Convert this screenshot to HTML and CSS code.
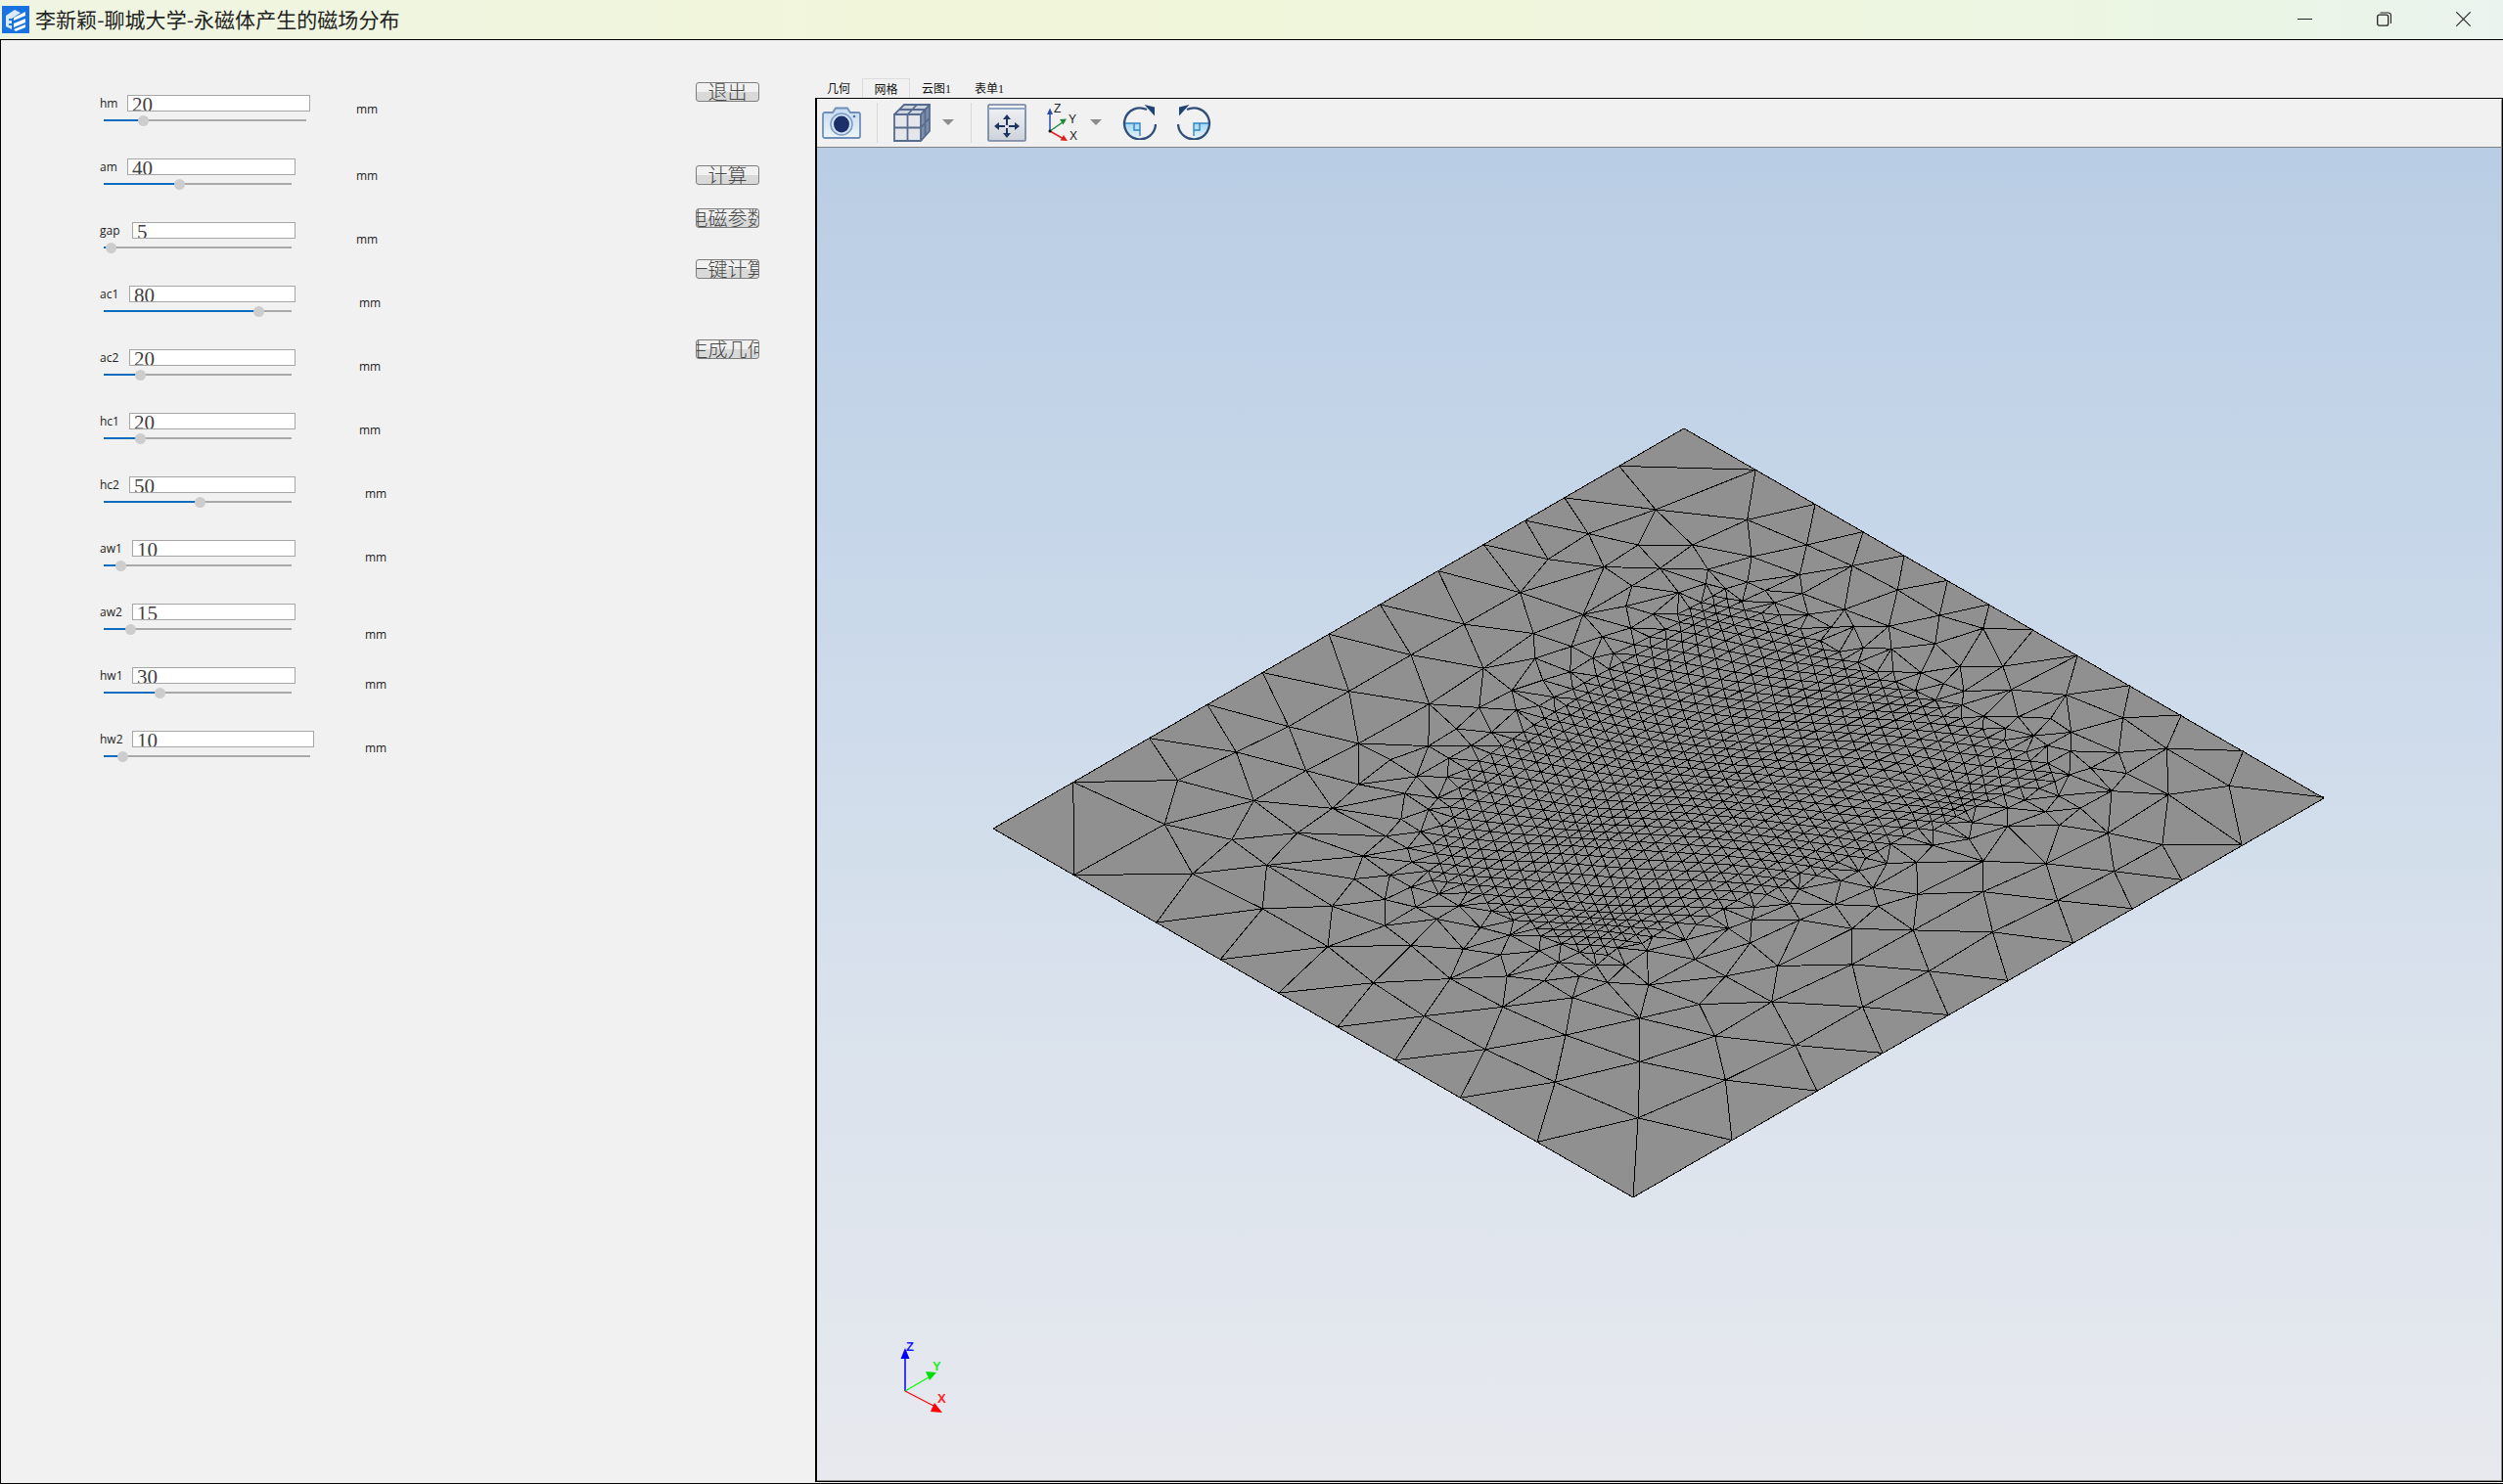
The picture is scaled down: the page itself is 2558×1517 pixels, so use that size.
FILE: index.html
```html
<!DOCTYPE html>
<html lang="zh">
<head>
<meta charset="utf-8">
<title>李新颖-聊城大学-永磁体产生的磁场分布</title>
<link rel="stylesheet" href="styles.css">
</head>
<body>
<div class="window">
  <header class="titlebar">
    <svg class="appicon" viewBox="0 0 28 28">
      <rect width="28" height="28" fill="#1c78e6"/>
      <path d="M0 0h28v28H0z" fill="#1566d2" opacity=".35"/>
      <path d="M4 10 13 4l6 3-9 6v11l-6-3z" fill="#dcebfb"/>
      <path d="M7 13h3v2H7zM7 18h3v2H7z" fill="#1c78e6"/>
      <path d="M12 12l12-6v4l-12 5zM12 18l12-5v4l-12 5zM12 24l12-5v3l-10 4z" fill="#fff"/>
    </svg>
    <div class="apptitle">李新颖-聊城大学-永磁体产生的磁场分布</div>
    <div class="winctl">
      <svg class="winbtn" viewBox="0 0 15 15"><path d="M0 7.500h15" stroke="#222" fill="none"/></svg>
      <svg class="winbtn" viewBox="0 0 15 15"><rect x=".7" y="3.200" width="11" height="11" rx="2" fill="none" stroke="#222" stroke-width="1.300"/><path d="M3.500 1h8a3 3 0 0 1 3 3v8" fill="none" stroke="#222" stroke-width="1.100"/></svg>
      <svg class="winbtn" viewBox="0 0 15 15"><path d="M.3.3l14.400 14.400M14.700.3.3 14.700" stroke="#222" stroke-width="1.100" fill="none"/></svg>
    </div>
  </header>

  <main class="main">
    <section class="params">
      <div class="row"><div class="field"><div class="line"><span class="lab lab-a">hm</span><div class="val w-187">20</div></div><div class="track w-207"><div class="fill" style="width:40px"><i class="thumb"></i></div></div></div><span class="mm mm-a mt-6">mm</span></div>
      <div class="row"><div class="field"><div class="line"><span class="lab lab-a">am</span><div class="val w-172">40</div></div><div class="track w-192"><div class="fill" style="width:77px"><i class="thumb"></i></div></div></div><span class="mm mm-a">mm</span></div>
      <div class="row"><div class="field"><div class="line"><span class="lab lab-c">gap</span><div class="val w-167">5</div></div><div class="track w-192"><div class="fill" style="width:7px"><i class="thumb"></i></div></div></div><span class="mm mm-a">mm</span></div>
      <div class="row"><div class="field"><div class="line"><span class="lab lab-b">ac1</span><div class="val w-170">80</div></div><div class="track w-192"><div class="fill" style="width:158px"><i class="thumb"></i></div></div></div><span class="mm mm-b">mm</span></div>
      <div class="row"><div class="field"><div class="line"><span class="lab lab-b">ac2</span><div class="val w-170">20</div></div><div class="track w-192"><div class="fill" style="width:37px"><i class="thumb"></i></div></div></div><span class="mm mm-b">mm</span></div>
      <div class="row"><div class="field"><div class="line"><span class="lab lab-b">hc1</span><div class="val w-170">20</div></div><div class="track w-192"><div class="fill" style="width:37px"><i class="thumb"></i></div></div></div><span class="mm mm-b">mm</span></div>
      <div class="row"><div class="field"><div class="line"><span class="lab lab-b">hc2</span><div class="val w-170">50</div></div><div class="track w-192"><div class="fill" style="width:98px"><i class="thumb"></i></div></div></div><span class="mm mm-c">mm</span></div>
      <div class="row"><div class="field"><div class="line"><span class="lab lab-c">aw1</span><div class="val w-167">10</div></div><div class="track w-192"><div class="fill" style="width:17px"><i class="thumb"></i></div></div></div><span class="mm mm-c">mm</span></div>
      <div class="row"><div class="field"><div class="line"><span class="lab lab-c">aw2</span><div class="val w-167">15</div></div><div class="track w-192"><div class="fill" style="width:27px"><i class="thumb"></i></div></div></div><span class="mm mm-c mt-23">mm</span></div>
      <div class="row"><div class="field"><div class="line"><span class="lab lab-c">hw1</span><div class="val w-167">30</div></div><div class="track w-192"><div class="fill" style="width:57px"><i class="thumb"></i></div></div></div><span class="mm mm-c">mm</span></div>
      <div class="row"><div class="field"><div class="line"><span class="lab lab-c">hw2</span><div class="val w-186">10</div></div><div class="track w-211"><div class="fill" style="width:19px"><i class="thumb"></i></div></div></div><span class="mm mm-c">mm</span></div>
    </section>

    <section class="actions">
      <button class="btn"><span>退出</span></button>
      <button class="btn"><span>计算</span></button>
      <button class="btn"><span>电磁参数</span></button>
      <button class="btn"><span>一键计算</span></button>
      <button class="btn"><span>生成几何</span></button>
    </section>

    <section class="workspace">
      <nav class="tabs">
        <span class="tab">几何</span>
        <span class="tab tab-on">网格</span>
        <span class="tab">云图1</span>
        <span class="tab">表单1</span>
      </nav>
      <div class="frame">
        <div class="toolbar">
          <svg class="ic-camera" viewBox="0 0 40 33">
            <defs>
              <linearGradient id="camg" x1="0" y1="0" x2="0" y2="1"><stop offset="0" stop-color="#c6daf0"/><stop offset="1" stop-color="#eef4fa"/></linearGradient>
              <linearGradient id="fitg" x1="0" y1="0" x2="0" y2="1"><stop offset="0" stop-color="#f2f3f5"/><stop offset="1" stop-color="#cdd2db"/></linearGradient>
              <linearGradient id="rotg" x1="0" y1="0" x2="0" y2="1"><stop offset="0" stop-color="#a4d6f3"/><stop offset="1" stop-color="#e4f4fc"/></linearGradient>
            </defs>
            <path d="M3 6h8l3-4.500h12l3 4.500h8a2 2 0 0 1 2 2v22a2 2 0 0 1-2 2H3a2 2 0 0 1-2-2V8a2 2 0 0 1 2-2z" fill="url(#camg)" stroke="#6e90b8" stroke-width="1.800"/>
            <circle cx="20" cy="18" r="11" fill="#d4e4f4" stroke="#7b9cc2" stroke-width="1.500"/>
            <ellipse cx="20" cy="18" rx="8" ry="8.500" fill="#1b2f68"/>
            <circle cx="33" cy="10" r="1.300" fill="#4d6f9f"/>
          </svg>
          <i class="sep ml-16"></i>
          <svg class="ic-cube ml-16" viewBox="0 0 38 39">
            <path d="M11 1h26L28 11H1z" fill="#ced5df"/>
            <path d="M1 11h27v27H1z" fill="#e4e6ea"/>
            <path d="M28 11l9-10v27l-9 10z" fill="#7f8fa9"/>
            <path d="M11 1h26L28 11H1zM1 11h27v27H1zM28 11l9-10v27l-9 10zM14.500 11v27M1 24.500h27M24 1 14.500 11M6 6h26M32.500 6v27M28 24.500l9-10" fill="none" stroke="#566b8e" stroke-width="1.800"/>
          </svg>
          <i class="caret ml-12"></i>
          <i class="sep ml-17"></i>
          <svg class="ic-fit ml-16" viewBox="0 0 40 39">
            <rect x="1" y="1" width="38" height="37" rx="1" fill="url(#fitg)" stroke="#6e7f9d" stroke-width="1.600"/>
            <path d="M1 4h38v2H1z" fill="#8fa6c6"/>
            <path d="M20 11l-4 5h3v6h2v-6h3zM20 35l-4-5h3v-5h2v5h3zM7 23l5-4v3h6v2h-6v3zM33 23l-5-4v3h-6v2h6v3z" fill="#1f3560"/>
          </svg>
          <svg class="ic-axes ml-21" viewBox="0 0 32 38">
            <path d="M3 28V9" stroke="#2a4ea8" stroke-width="1.500" fill="none"/>
            <path d="M3 4.500 0 11h6z" fill="#2a4ea8"/>
            <path d="M3 28l13-9" stroke="#1a8a3a" stroke-width="1.500" fill="none"/>
            <path d="M20 15.500l-7 .5 3.500 5.500z" fill="#1a8a3a"/>
            <path d="M3 28l14 8" stroke="#e02020" stroke-width="1.500" fill="none"/>
            <path d="M21 38l-7.500-.5 3.500-5.500z" fill="#e02020"/>
            <circle cx="3" cy="28" r="1.500" fill="#111"/>
            <text class="ax" x="7" y="9">Z</text>
            <text class="ax" x="22" y="20">Y</text>
            <text class="ax" x="23" y="37">X</text>
          </svg>
          <i class="caret ml-12"></i>
          <svg class="ic-rot ml-21" viewBox="0 0 35 36">
            <path d="M1.500 19H18V34.500A16.500 16.500 0 0 1 1.500 19z" fill="url(#rotg)"/>
            <path d="M1.500 19H18V32M12 19v7h6" fill="none" stroke="#2f86c4" stroke-width="1.400"/>
            <path d="M34 20A16 16 0 1 1 25 5" fill="none" stroke="#2f4f7a" stroke-width="2.300"/>
            <path d="M22.500 0 33 2.500v9z" fill="#1f4374"/>
          </svg>
          <svg class="ic-rot ic-flip ml-21" viewBox="0 0 35 36">
            <path d="M1.500 19H18V34.500A16.500 16.500 0 0 1 1.500 19z" fill="url(#rotg)"/>
            <path d="M1.500 19H18V32M12 19v7h6" fill="none" stroke="#2f86c4" stroke-width="1.400"/>
            <path d="M34 20A16 16 0 1 1 25 5" fill="none" stroke="#2f4f7a" stroke-width="2.300"/>
            <path d="M22.500 0 33 2.500v9z" fill="#1f4374"/>
          </svg>
        </div>
        <div class="viewport">
          <svg id="mesh" class="scene" viewBox="835 151 1720 1361">
            <polygon class="plate" points="1721,438 2375,816 1669,1224 1015,847"/>
            <path id="edges" class="edges" d=""/>
            <polygon class="plate-edge" points="1721,438 2375,816 1669,1224 1015,847"/>
            <path d="M925 1422V1385" class="tz"/><path d="M925 1378l-4.500 11h9z" class="hz"/>
            <path d="M925 1422l24-14" class="ty"/><path d="M957 1403l-11-1 4 9z" class="hy"/>
            <path d="M925 1422l29 15" class="tx"/><path d="M963 1444l-12-1 4-9z" class="hx"/>
            <text class="lz" x="926" y="1381">Z</text>
            <text class="ly" x="953" y="1401">Y</text>
            <text class="lx" x="958" y="1434">X</text>
          </svg>
        </div>
      </div>
    </section>
  </main>
</div>
<script src="script.js"></script>
</body>
</html>
```
FILE: styles.css
```css
* { box-sizing: border-box; }
html, body { margin: 0; padding: 0; background: #f1f1f1; }
.window { width: 2558px; height: 1517px; display: flex; flex-direction: column; overflow: hidden; }

.titlebar { height: 41px; flex: none; display: flex; align-items: center; padding-left: 2px; padding-bottom: 1px; border-bottom: 1px solid #000;
  background: linear-gradient(90deg, #eff5e2 0, #f1f6da 40%, #f0f6dc 60%, #eaf5e3 88%, #ebf3ee 100%); }
.appicon { width: 28px; height: 28px; flex: none; }
.apptitle { margin-left: 6px; font: 21px/26px "Noto Sans CJK SC", sans-serif; color: #222; white-space: nowrap; padding-bottom: 2px; letter-spacing: .05px; }
.winctl { margin-left: auto; display: flex; gap: 66px; padding-right: 33px; }
.winbtn { width: 15px; height: 15px; display: block; }

.main { flex: 1; display: flex; background: #f1f1f1; border-left: 1px solid #000; border-bottom: 1px solid #000; min-height: 0; }

.params { width: 710px; flex: none; padding: 56px 0 0 101px; }
.row { height: 65px; display: flex; align-items: flex-start; }
.field { width: 240px; flex: none; }
.line { display: flex; height: 17px; }
.lab { font: 12px/17px "Open Sans", sans-serif; color: #222; flex: none; }
.lab-a { width: 28px; }
.lab-b { width: 30px; }
.lab-c { width: 33px; }
.val { height: 17px; border: 1px solid #a6a6a6; background: #fff; overflow: hidden; padding-left: 4px;
  font: 21px/19px "Liberation Serif", serif; color: #3f3f3f; flex: none; }
.w-187 { width: 187px; }
.w-186 { width: 186px; }
.w-172 { width: 172px; }
.w-170 { width: 170px; }
.w-167 { width: 167px; }
.track { height: 2px; margin: 8px 0 0 4px; background: #a9a9a9; position: relative; }
.w-207 { width: 207px; }
.w-192 { width: 192px; }
.w-211 { width: 211px; }
.fill { height: 2px; background: #0b6cbf; position: relative; }
.thumb { position: absolute; right: -5.500px; top: -4.500px; width: 11px; height: 11px; border-radius: 50%; background: #cdcdcd; }
.mm { font: 12px/15px "Open Sans", sans-serif; color: #222; margin-top: 10px; }
.mm-a { margin-left: 22px; }
.mm-b { margin-left: 25px; }
.mm-c { margin-left: 31px; }
.mt-6 { margin-top: 7px; }
.mt-23 { margin-top: 24px; }

.actions { width: 122px; flex: none; display: grid; grid-template-rows: 85px 44px 52px 82px 20px; align-content: start; padding-top: 43px; }
.btn { width: 65px; height: 20px; padding: 0; display: flex; justify-content: center; overflow: hidden; border: 1px solid #7d7d7d; border-radius: 3px;
  background: linear-gradient(#f1f1f1 50%, #d9d9d9 50%); font: 300 20px/18px "Noto Sans CJK SC", serif; color: #484848; white-space: nowrap; }
.btn span { flex: none; }

.workspace { flex: 1; min-width: 0; display: flex; flex-direction: column; padding-bottom: 1px; }
.tabs { height: 59px; flex: none; display: flex; align-items: flex-end; }
.tab { height: 20px; padding: 0 12px; font: 12px/23px "Liberation Serif", "Noto Sans CJK SC", serif; color: #111; white-space: nowrap; }
.tab-on { padding: 0 11.500px; border: 1px solid #dcdcdc; border-bottom: 0; line-height: 22px; }
.frame { flex: 1; min-height: 0; display: flex; flex-direction: column; border: 1px solid #000; border-left-width: 2px; }
.toolbar { height: 50px; flex: none; display: flex; align-items: center; padding: 0 0 2px 5px; background: #f1f1f1; border-top: 1px solid #fff; border-right: 1px solid #8a8a8a; border-bottom: 1px solid #808080; }
.ml-12 { margin-left: 12px; }
.ml-16 { margin-left: 16px; }
.ml-17 { margin-left: 17px; }
.ml-21 { margin-left: 21px; }
.sep { width: 1px; height: 41px; background: #d8d8d8; flex: none; }
.caret { width: 0; height: 0; border-left: 6px solid transparent; border-right: 6px solid transparent; border-top: 6px solid #8b8b8b; flex: none; }
.ic-camera { width: 40px; height: 33px; flex: none; }
.ic-cube { width: 38px; height: 39px; flex: none; }
.ic-fit { width: 40px; height: 39px; flex: none; }
.ic-axes { width: 32px; height: 38px; flex: none; }
.ic-rot { width: 35px; height: 36px; flex: none; }
.ic-flip { transform: scaleX(-1); }
.ax { font: 12px "Liberation Sans", sans-serif; fill: #222; }

.viewport { flex: 1; min-height: 0; position: relative; overflow: hidden; background: linear-gradient(#b9cde4 0, #c7d7e9 30%, #d8e1ec 62%, #e7e9ee 100%); border-right: 1px solid #8a8a8a; border-bottom: 1px solid #8a8a8a; }
.scene { position: absolute; left: 0; top: 0; width: 1720px; height: 1361px; display: block; }
.plate { fill: #909090; }
.plate-edge { fill: none; stroke: #000; stroke-width: 1; shape-rendering: crispEdges; }
.edges { fill: none; stroke: #000; stroke-width: 1; shape-rendering: crispEdges; }
.tz { stroke: #0000ff; stroke-width: 1.500; fill: none; }
.ty { stroke: #00ff00; stroke-width: 1.200; fill: none; }
.tx { stroke: #ff0000; stroke-width: 1.200; fill: none; }
.hz { fill: #0000ff; }
.hy { fill: #00e000; }
.hx { fill: #ff0000; }
.lz, .ly, .lx { font: bold 13px "Liberation Sans", sans-serif; }
.lz { fill: #1a1aff; }
.ly { fill: #22ee22; }
.lx { fill: #ff2222; }
```
FILE: script.js
```js
// Builds the triangular surface mesh of the plate: a graded point set, Delaunay-triangulated.
(function () {
  var L = [1015, 847], T = [1721, 438], B = [1669, 1224];
  var e1 = [T[0] - L[0], T[1] - L[1]], e2 = [B[0] - L[0], B[1] - L[1]];
  var det = e1[0] * e2[1] - e2[0] * e1[1];
  function toUV(x, y) {
    var dx = x - L[0], dy = y - L[1];
    return [(dx * e2[1] - e2[0] * dy) / det, (e1[0] * dy - dx * e1[1]) / det];
  }
  function toXY(p) {
    return [L[0] + p[0] * e1[0] + p[1] * e2[0], L[1] + p[0] * e1[1] + p[1] * e2[1]];
  }
  var seed = 12345;
  function rnd() { seed = (seed * 16807) % 2147483647; return seed / 2147483647; }

  var pts = [];
  function add(u, v) { pts.push([u + (rnd() - 0.5) * 2e-6, v + (rnd() - 0.5) * 2e-6]); }

  // boundary nodes
  var onLT = [.116,.226,.31,.39,.486,.56,.644,.71,.77,.827,.906];
  var onLB = [.126,.255,.355,.446,.538,.628,.73,.85];
  var onTR = [.112,.205,.28,.344,.412,.477,.546,.615,.697,.777,.874];
  var onBR = [.143,.266,.361,.456,.542,.637,.722,.794,.881];
  add(0, 0); add(1, 0); add(0, 1); add(1, 1);
  onLT.forEach(function (f) { add(f, 0); });
  onLB.forEach(function (f) { add(0, f); });
  onTR.forEach(function (f) { add(1, f); });
  onBR.forEach(function (f) { add(f, 1); });

  // coarse interior nodes, read from the picture
  var coarse = [775,193,880,213,698,240,817,262,755,262,652,290,716,305,780,308,885,285,948,262,1000,303,620,355,692,398,748,342,835,310,880,335,940,320,1052,350,1100,400,556,417,635,435,1002,422,1095,455,1150,425,1045,465,495,477,578,503,1047,510,1128,548,1182,545,1245,555,1190,598,424,548,516,573,355,617,435,650,515,655,295,667,375,703,435,730,228,722,315,762,405,777,488,748,213,808,290,838,365,825,440,870,245,905,330,888,325,973,405,968,430,915,400,1047,495,1045,465,955,555,1052,452,1118,540,1110,605,1105,510,1183,600,1165,680,1147,767,1122,855,1105,580,1248,672,1220,757,1187,825,1160,908,1155,1000,1082,915,1085,1088,1095,1012,1165,660,1312,757,1272,843,1222,935,1240,755,1382,855,1308,1070,1015,1150,940,1235,957,1150,880,1222,885,1300,900,1075,945,1293,825,1237,810,1297,743,1362,750,1355,848,1250,665,1305,668,1360,660,1310,600,1000,1012,885,995,940,995,980,965,1030,968,820,1072,765,1055];
  for (var c = 0; c < coarse.length; c += 2) {
    var q = toUV(1000 + coarse[c] / 1.12, 420 + coarse[c + 1] / 1.912);
    add(q[0], q[1]);
  }

  // fine core region
  var core = [[.83,.235],[.85,.775],[.55,.715],[.265,.655],[.25,.40],[.39,.295],[.65,.255]];
  function inside(u, v) {
    var s = false, m = core.length;
    for (var i = 0, j = m - 1; i < m; j = i++) {
      var a = core[i], b = core[j];
      if ((a[1] > v) !== (b[1] > v) && u < (b[0] - a[0]) * (v - a[1]) / (b[1] - a[1]) + a[0]) s = !s;
    }
    return s;
  }
  function coreDist(u, v) {
    if (inside(u, v)) return 0;
    var best = 9, m = core.length;
    for (var i = 0, j = m - 1; i < m; j = i++) {
      var a = core[i], b = core[j], dx = b[0] - a[0], dy = b[1] - a[1];
      var t = Math.max(0, Math.min(1, ((u - a[0]) * dx + (v - a[1]) * dy) / (dx * dx + dy * dy)));
      var d = Math.hypot(u - a[0] - t * dx, v - a[1] - t * dy);
      if (d < best) best = d;
    }
    return best;
  }
  function free(u, v, r, limit) {
    for (var i = 0; i < limit; i++) {
      var dx = pts[i][0] - u, dy = pts[i][1] - v;
      if (dx * dx + dy * dy < r * r) return false;
    }
    return true;
  }
  // the lattice is pulled toward these spots, where the mesh is at its densest
  var spots = [[.326,.609,.30,.085],[.724,.724,.34,.07],[.779,.269,.22,.06],[.42,.47,.16,.07]];
  var h0 = 0.0175;
  var rowH = h0 * 0.866;
  var base = pts.length;
  for (var r = 0, y0 = 0.05; y0 < 0.95; r++, y0 += rowH) {
    for (var x0 = 0.05 + (r % 2) * h0 / 2; x0 < 0.98; x0 += h0) {
      var wu = x0 + 0.011 * Math.sin(y0 * 9 + 1) + 0.006 * Math.sin(x0 * 17);
      var wv = y0 + 0.011 * Math.sin(x0 * 8) + 0.006 * Math.sin(y0 * 15 + 2);
      var pu = wu, pv = wv;
      spots.forEach(function (s) {
        var du = s[0] - wu, dv = s[1] - wv;
        var f = s[2] * Math.exp(-(du * du + dv * dv) / (s[3] * s[3]));
        pu += du * f; pv += dv * f;
      });
      if (inside(pu, pv) && free(pu, pv, h0 * 0.72, base)) add(pu, pv);
    }
  }

  // graded transition around the core
  var cand = [];
  for (var cu = 0.02; cu < 0.99; cu += 0.011) {
    for (var cv = 0.02; cv < 0.99; cv += 0.011) {
      var d = coreDist(cu, cv);
      if (d > 0 && d < 0.2) cand.push([cu + (rnd() - .5) * .004, cv + (rnd() - .5) * .004, d]);
    }
  }
  cand.sort(function (a, b) { return a[2] - b[2]; });
  cand.forEach(function (p) {
    var h = Math.min(0.085, h0 * 1.05 + 0.28 * p[2]);
    if (free(p[0], p[1], h, pts.length)) add(p[0], p[1]);
  });

  // Bowyer-Watson Delaunay triangulation
  var n = pts.length;
  var all = pts.concat([[-40, -40], [90, -40], [0.5, 90]]);
  function circ(a, b, c) {
    var A = all[a], Bb = all[b], C = all[c];
    var dd = 2 * (A[0] * (Bb[1] - C[1]) + Bb[0] * (C[1] - A[1]) + C[0] * (A[1] - Bb[1]));
    if (Math.abs(dd) < 1e-14) dd = 1e-14;
    var a2 = A[0] * A[0] + A[1] * A[1], b2 = Bb[0] * Bb[0] + Bb[1] * Bb[1], c2 = C[0] * C[0] + C[1] * C[1];
    var ux = (a2 * (Bb[1] - C[1]) + b2 * (C[1] - A[1]) + c2 * (A[1] - Bb[1])) / dd;
    var uy = (a2 * (C[0] - Bb[0]) + b2 * (A[0] - C[0]) + c2 * (Bb[0] - A[0])) / dd;
    var dx = A[0] - ux, dy = A[1] - uy;
    return { a: a, b: b, c: c, x: ux, y: uy, r: dx * dx + dy * dy };
  }
  var tris = [circ(n, n + 1, n + 2)];
  for (var i = 0; i < n; i++) {
    var p = all[i], keep = [], edges = {};
    for (var k = 0; k < tris.length; k++) {
      var t = tris[k], ex = p[0] - t.x, ey = p[1] - t.y;
      if (ex * ex + ey * ey < t.r) {
        [[t.a, t.b], [t.b, t.c], [t.c, t.a]].forEach(function (e) {
          var key = Math.min(e[0], e[1]) + "_" + Math.max(e[0], e[1]);
          edges[key] = edges[key] ? 2 : 1;
        });
      } else keep.push(t);
    }
    Object.keys(edges).forEach(function (key) {
      if (edges[key] === 1) {
        var s = key.split("_");
        keep.push(circ(+s[0], +s[1], i));
      }
    });
    tris = keep;
  }

  // one path holding every unique edge; the plate outline is drawn by its own polygon
  function onRim(a, b) {
    var e = 1e-4;
    return (a[0] < e && b[0] < e) || (a[1] < e && b[1] < e) || (a[0] > 1 - e && b[0] > 1 - e) || (a[1] > 1 - e && b[1] > 1 - e);
  }
  var seen = {}, out = [];
  tris.forEach(function (t) {
    if (t.a >= n || t.b >= n || t.c >= n) return;
    [[t.a, t.b], [t.b, t.c], [t.c, t.a]].forEach(function (e) {
      var key = Math.min(e[0], e[1]) + "_" + Math.max(e[0], e[1]);
      if (seen[key]) return;
      seen[key] = 1;
      if (onRim(all[e[0]], all[e[1]])) return;
      var P = toXY(all[e[0]]), Q = toXY(all[e[1]]);
      out.push("M" + P[0].toFixed(1) + " " + P[1].toFixed(1) + "L" + Q[0].toFixed(1) + " " + Q[1].toFixed(1));
    });
  });
  document.getElementById("edges").setAttribute("d", out.join(""));
})();
```
